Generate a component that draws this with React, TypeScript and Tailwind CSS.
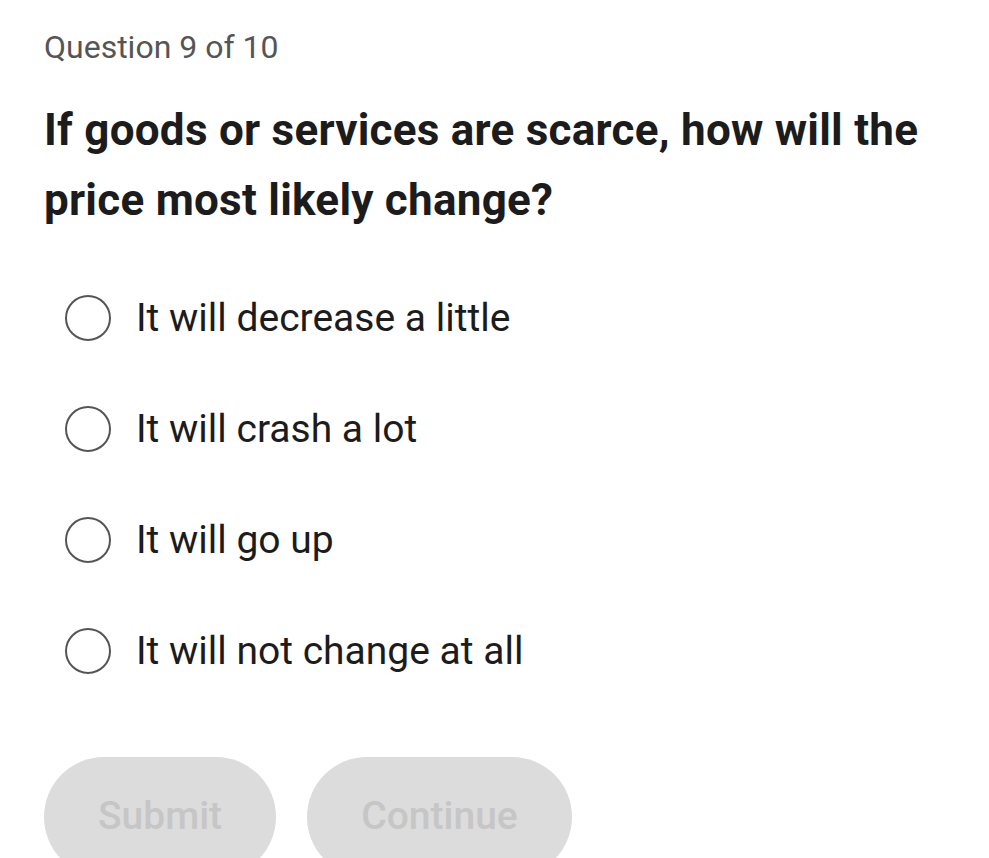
export default function App() {
  const options = [
    "It will decrease a little",
    "It will crash a lot",
    "It will go up",
    "It will not change at all",
  ];
  return (
    <div className="h-[858px] w-full overflow-hidden bg-white font-['Roboto',sans-serif]">
      <div className="pl-[44px] pt-[27px]">
        <p className="text-[32px] leading-[40px] text-[#555555]">Question 9 of 10</p>
        <h1 className="mt-[28px] w-[930px] text-[44px] font-bold leading-[70px] tracking-[0.25px] text-[#1c1c1c]">
          If goods or services are scarce, how will the price most likely change?
        </h1>
        <div className="mt-[60px] flex flex-col gap-[65px] pl-[21px]">
          {options.map((o) => (
            <label key={o} className="flex h-[46px] items-center gap-[25px]">
              <span className="h-[46px] w-[46px] shrink-0 rounded-full border-2 border-[#555555]" />
              <span className="text-[39px] leading-[46px] text-[#1c1c1c]">{o}</span>
            </label>
          ))}
        </div>
        <div className="mt-[83px] flex gap-[31px]">
          <button className="h-[120px] w-[232px] rounded-full bg-[#dcdcdc] pb-[2px] text-[39px] font-medium text-[#c6c6c6]">
            Submit
          </button>
          <button className="h-[120px] w-[265px] rounded-full bg-[#dcdcdc] pb-[2px] text-[39px] font-medium text-[#c6c6c6]">
            Continue
          </button>
        </div>
      </div>
    </div>
  );
}
